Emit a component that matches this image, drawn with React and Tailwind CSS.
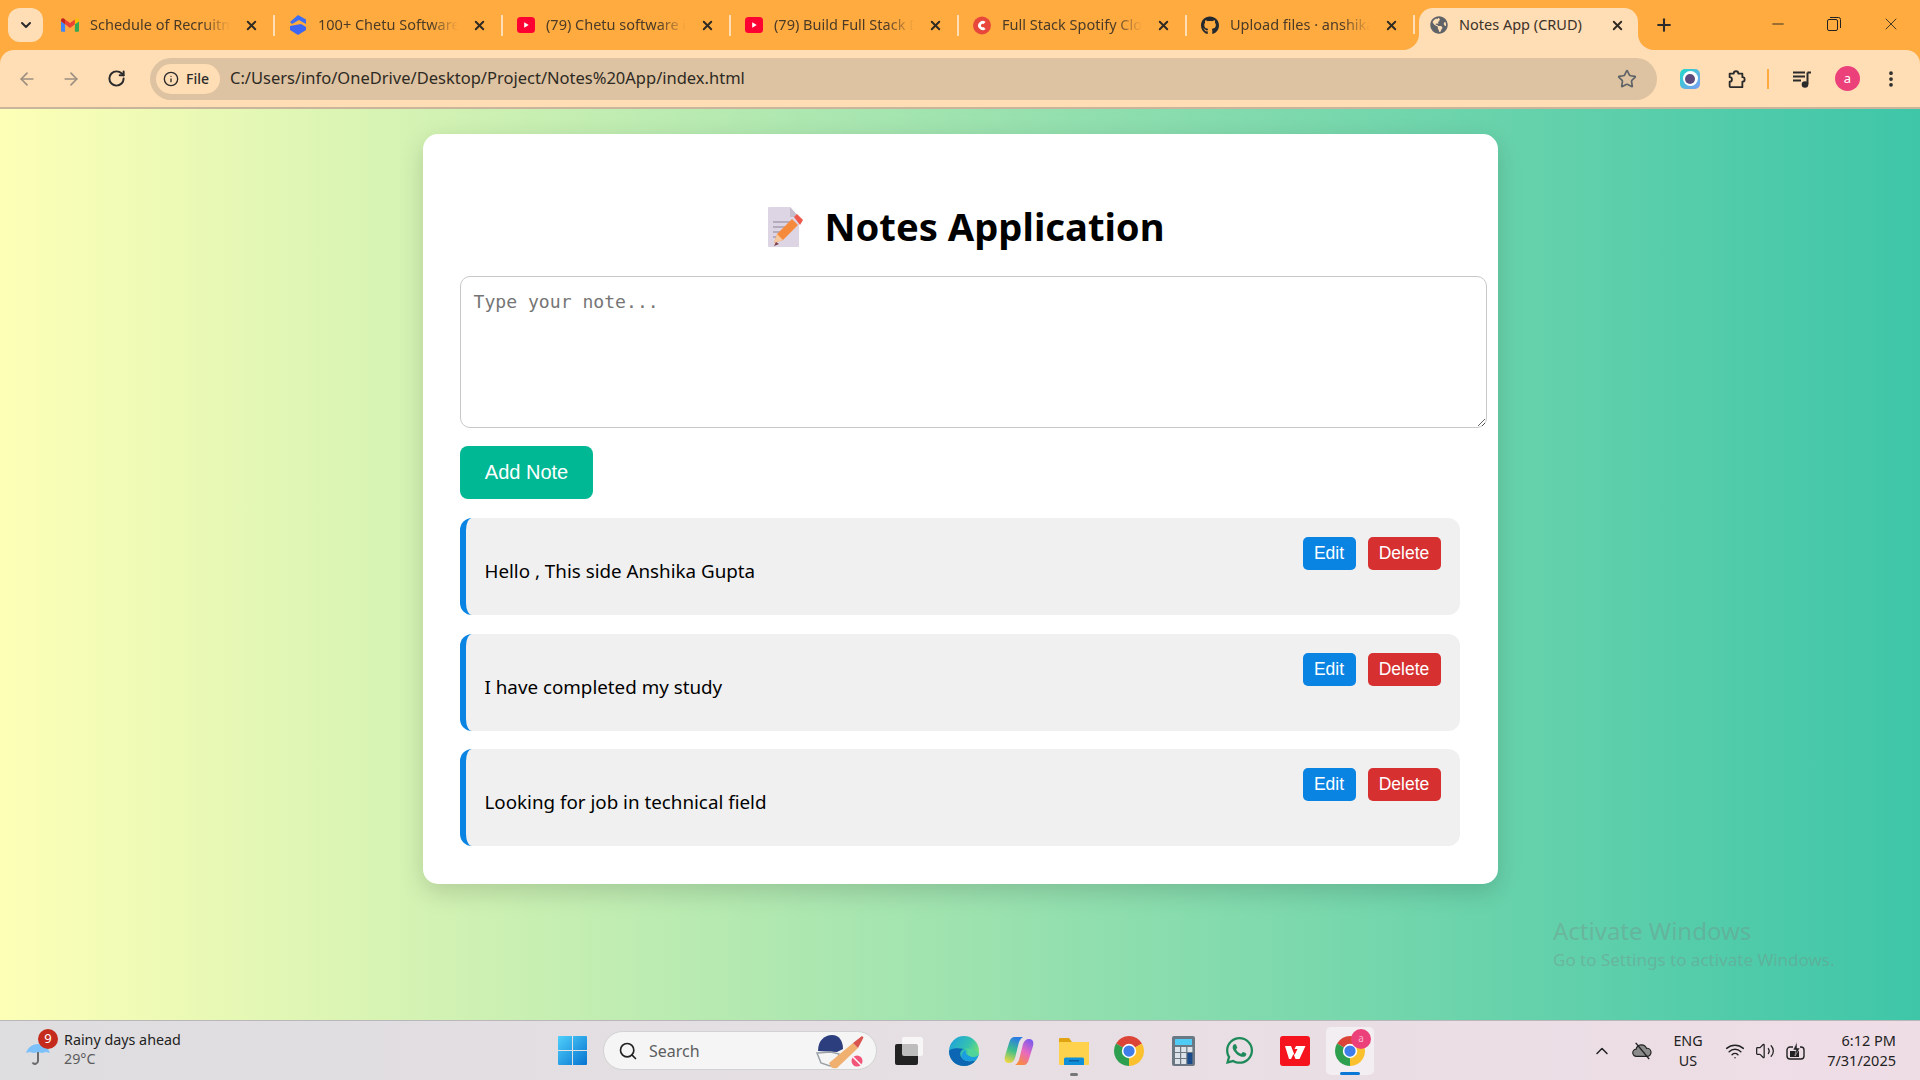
import {
  ArrowLeft,
  ArrowRight,
  ChevronDown,
  ChevronUp,
  Info,
  Minus,
  MoreVertical,
  Plus,
  RotateCw,
  Search,
  Star,
  Volume2,
  Wifi,
  X,
} from "lucide-react";
import { FaGithub, FaGlobeAmericas, FaWhatsapp } from "react-icons/fa";

const UI = "font-['Noto_Sans','Open_Sans',sans-serif]";

function GmailIcon() {
  return (
    <svg viewBox="0 0 24 18" className="w-[18px] h-[14px]">
      <path d="M1.6 18A1.6 1.6 0 0 1 0 16.4V4l5.5 4v10z" fill="#4285F4" />
      <path d="M18.500 18V8L24 4v12.400a1.600 1.600 0 0 1-1.600 1.600z" fill="#34A853" />
      <path d="M18.500 1.500V8L24 4V2.500C24 .3 21.600-.8 19.900.5z" fill="#FBBC04" />
      <path d="M5.500 8V1.500L12 6.400l6.500-4.900V8L12 12.900z" fill="#EA4335" />
      <path d="M0 2.500V4l5.500 4V1.500L4.100.5C2.400-.8 0 .3 0 2.500z" fill="#C5221F" />
    </svg>
  );
}

function ChetuIcon() {
  return (
    <svg viewBox="0 0 18 20" className="w-[18px] h-[20px]">
      <path d="M9 0l8 4.500V9l-7-4-7 4-2-2z" fill="#3D6DF2" />
      <path d="M1 11l11-2 5 3v3l-8 5-8-5z" fill="#3F66F0" />
    </svg>
  );
}

function YoutubeIcon() {
  return (
    <svg viewBox="0 0 20 18" className="w-[19px] h-[18px]">
      <rect width="20" height="18" rx="4" fill="#FF0033" />
      <path d="M8 6l5 3-5 3z" fill="#fff" />
    </svg>
  );
}

function SpotifyCloneIcon() {
  return (
    <svg viewBox="0 0 20 20" className="w-[19px] h-[19px]">
      <circle cx="10" cy="10" r="10" fill="#E8483B" />
      <path d="M14 6.200a5 5 0 1 0 0 7.600l-2.300-2a2 2 0 1 1 0-3.600z" fill="#fff" />
    </svg>
  );
}

function Tab({ icon, title }) {
  return (
    <div className="w-[228px] h-[34px] mb-[8px] flex items-center pl-[14px] shrink-0">
      <span className="w-[18px] flex justify-center shrink-0">{icon}</span>
      <span className="ml-[11px] w-[140px] overflow-hidden whitespace-nowrap text-[14.500px] text-[#4a3a26] [mask-image:linear-gradient(to_right,black_80%,transparent)]">
        {title}
      </span>
      <X size={15} strokeWidth={3} className="ml-[14px] text-[#2f2a22] shrink-0" />
      <span className="ml-auto w-[2px] h-[21px] bg-[#FFDDB5] shrink-0" />
    </div>
  );
}

function ActiveTab() {
  return (
    <div className="relative ml-[4px] w-[219px] h-[42px] flex items-center pl-[11px] pr-[13px] pb-[8px] bg-[#FFDDB5] rounded-t-[14px] shrink-0">
      <span className="absolute -left-[16px] bottom-0 w-[16px] h-[16px] bg-[#FFDDB5]">
        <span className="block w-full h-full bg-[#FFAB40] rounded-br-[16px]" />
      </span>
      <span className="absolute -right-[16px] bottom-0 w-[16px] h-[16px] bg-[#FFDDB5]">
        <span className="block w-full h-full bg-[#FFAB40] rounded-bl-[16px]" />
      </span>
      <FaGlobeAmericas size={18} className="text-[#5f6368] shrink-0" />
      <span className="ml-[11px] whitespace-nowrap text-[14.500px] text-[#3b3228]">Notes App (CRUD)</span>
      <X size={15} strokeWidth={3} className="ml-auto text-[#2f2a22] shrink-0" />
    </div>
  );
}

function RestoreIcon() {
  return (
    <svg viewBox="0 0 14 14" className="self-start mt-[17px] ml-[40px] w-[14px] h-[14px] shrink-0" fill="none" stroke="#222" strokeWidth="1">
      <rect x="0.500" y="2.500" width="10" height="11" rx="1.500" />
      <path d="M3 .5h8.500a2 2 0 0 1 2 2V11" />
    </svg>
  );
}

function TabStrip() {
  return (
    <div className="h-[50px] bg-[#FFAB40] flex items-end pl-[8px] shrink-0">
      <div className="self-start mt-[8px] mr-[4px] w-[35px] h-[34px] rounded-[12px] bg-[#FFDDB5] flex items-center justify-center shrink-0">
        <ChevronDown size={16} strokeWidth={3} className="text-[#2b2b2b]" />
      </div>
      <Tab icon={<GmailIcon />} title="Schedule of Recruitment" />
      <Tab icon={<ChetuIcon />} title="100+ Chetu Software Jobs" />
      <Tab icon={<YoutubeIcon />} title="(79) Chetu software interview" />
      <Tab icon={<YoutubeIcon />} title="(79) Build Full Stack Dev" />
      <Tab icon={<SpotifyCloneIcon />} title="Full Stack Spotify Clone" />
      <Tab icon={<FaGithub size={19} className="text-[#24292f]" />} title="Upload files · anshika" />
      <ActiveTab />
      <Plus size={20} strokeWidth={2.500} className="self-center ml-[16px] text-[#2b2b2b] shrink-0" />
      <Minus size={18} strokeWidth={1.200} className="self-start mt-[15px] ml-[95px] text-[#222] shrink-0" />
      <RestoreIcon />
      <X size={20} strokeWidth={1} className="self-start mt-[14px] ml-[40px] text-[#222] shrink-0" />
    </div>
  );
}

function CameraExt() {
  return (
    <span className="w-[20px] h-[20px] rounded-[5px] bg-[linear-gradient(135deg,#1fd8c8,#7f9cf5)] flex items-center justify-center shrink-0">
      <span className="w-[15px] h-[15px] rounded-full bg-white flex items-center justify-center">
        <span className="w-[10px] h-[10px] rounded-full bg-[#5d4a7d]" />
      </span>
    </span>
  );
}

function ExtensionIcon() {
  return (
    <svg viewBox="0 0 22 22" className="ml-[26px] w-[20px] h-[20px] shrink-0" fill="none" stroke="#2b2b2b" strokeWidth="2" strokeLinejoin="round">
      <path d="M4 5h4.500a2.500 2.500 0 0 1 5 0H18v4a2.500 2.500 0 0 1 0 5v6H5a1 1 0 0 1-1-1v-5a2.500 2.500 0 0 0 0-5z" />
    </svg>
  );
}

function MediaIcon() {
  return (
    <svg viewBox="0 0 20 20" className="ml-[23px] w-[20px] h-[20px] shrink-0">
      <path d="M1 3.500h12M1 7.500h12M1 11.500h8" stroke="#2b2b2b" strokeWidth="2" />
      <path d="M15.500 3.500h3.500M15.500 3.500V15" stroke="#2b2b2b" strokeWidth="2" fill="none" />
      <circle cx="13" cy="15.500" r="3.300" fill="#2b2b2b" />
    </svg>
  );
}

function Toolbar() {
  return (
    <div className="h-[59px] bg-[#FFAB40] shrink-0">
      <div className={`h-full rounded-t-[14px] bg-[#FFDDB5] border-b-2 border-[#C9B59C] flex items-center ${UI}`}>
        <ArrowLeft size={20} strokeWidth={2} className="ml-[17px] text-[#9a8f80] shrink-0" />
        <ArrowRight size={20} strokeWidth={2} className="ml-[24px] text-[#9a8f80] shrink-0" />
        <RotateCw size={19} strokeWidth={2.500} className="ml-[26px] text-[#2b2b2b] shrink-0" />
        <div className="ml-[24px] w-[1507px] h-[42px] rounded-full bg-[#DDC3A1] flex items-center pl-[6px] pr-[20px] shrink-0">
          <div className="w-[64px] h-[30px] rounded-full bg-[#FFDDB5] flex items-center pl-[7px] shrink-0">
            <Info size={16} strokeWidth={2} className="text-[#2b2b2b] shrink-0" />
            <span className="ml-[7px] text-[14px] font-medium text-[#2b2b2b]">File</span>
          </div>
          <span className="ml-[10px] text-[16.500px] text-[#2e2a24] whitespace-nowrap">
            C:/Users/info/OneDrive/Desktop/Project/Notes%20App/index.html
          </span>
          <Star size={20} strokeWidth={2} className="ml-auto text-[#5f6368] shrink-0" />
        </div>
        <span className="ml-[23px]"><CameraExt /></span>
        <ExtensionIcon />
        <span className="ml-[21px] w-[2px] h-[20px] bg-[#FFAB40] shrink-0" />
        <MediaIcon />
        <span className="ml-[23px] w-[25px] h-[25px] rounded-full bg-[#EC407A] text-white text-[13px] flex items-center justify-center shrink-0">
          a
        </span>
        <MoreVertical size={20} strokeWidth={2.500} className="ml-[21px] text-[#2b2b2b] shrink-0" />
      </div>
    </div>
  );
}

function NoteEmoji() {
  return (
    <svg viewBox="0 0 36 40" className="w-[36px] h-[40px] shrink-0">
      <path d="M0 1a1 1 0 0 1 1-1h21l9 10v29a1 1 0 0 1-1 1H1a1 1 0 0 1-1-1z" fill="#DED5E4" />
      <path d="M22 0l9 10h-9z" fill="#C5BDCC" />
      <path d="M5 15h17M5 20h15M5 25h12M5 30h9" stroke="#A79FAE" strokeWidth="1.500" />
      <path d="M6 36l3-9L24 12l6 6-15 15z" fill="#F58A3C" />
      <path d="M26 10l3-3 6 6-3 5z" fill="#F0584A" />
      <path d="M6 36l3-9 6 6z" fill="#F7C9A0" />
      <path d="M6 39l2-4 3 2z" fill="#7A3E48" />
    </svg>
  );
}

function NoteCard({ text }) {
  return (
    <div className="h-[97px] rounded-[12px] border-l-[6px] border-[#0984E3] bg-[#F0F0F0] flex justify-between pl-[19px] pr-[19px] pt-[19px]">
      <p className={`mt-[19px] text-[18.800px] leading-[30px] text-black ${UI}`}>{text}</p>
      <div className="flex gap-[12px] items-start">
        <button className="w-[53px] h-[33px] rounded-[5px] bg-[#0984E3] text-white text-[17.500px] font-['Liberation_Sans',sans-serif]">
          Edit
        </button>
        <button className="w-[73px] h-[33px] rounded-[5px] bg-[#D63031] text-white text-[17.500px] font-['Liberation_Sans',sans-serif]">
          Delete
        </button>
      </div>
    </div>
  );
}

function NotesPage() {
  return (
    <main className="relative flex-1 bg-[linear-gradient(to_right,#FDFFB6,#3EC6A8)] pt-[25px] overflow-hidden">
      <div className="mx-auto w-[1075px] h-[750px] bg-white rounded-[15px] shadow-[0_8px_24px_rgba(0,0,0,0.15)] pl-[37px] pt-[66px]">
        <h1 className={`w-[1000px] h-[54px] mb-[22px] pl-[14px] flex items-center justify-center gap-[20px] text-[38.200px] font-bold text-black ${UI}`}>
          <NoteEmoji />
          Notes Application
        </h1>
        <textarea
          placeholder="Type your note..."
          className="block w-[1027px] h-[152px] rounded-[10px] border border-[#C8C8C8] px-[13px] py-[13px] text-[18.100px] leading-[24px] font-['DejaVu_Sans_Mono',monospace] placeholder:text-[#757575] outline-none"
        />
        <button className="block mt-[18px] w-[133px] h-[53px] pb-[2px] pl-[1px] rounded-[8px] bg-[#00B894] text-white text-[20px] font-['Liberation_Sans',sans-serif]">
          Add Note
        </button>
        <div className="mt-[19px] w-[1000px] flex flex-col gap-[18.500px]">
          <NoteCard text="Hello , This side Anshika Gupta" />
          <NoteCard text="I have completed my study" />
          <NoteCard text="Looking for job in technical field" />
        </div>
      </div>
      <div className={`absolute left-[1553px] top-[806px] text-[#788c87]/40 ${UI}`}>
        <div className="text-[24px] leading-[32px]">Activate Windows</div>
        <div className="text-[17px] leading-[25px]">Go to Settings to activate Windows.</div>
      </div>
    </main>
  );
}

function ChromeIcon({ size = "w-[30px] h-[30px]" }) {
  return (
    <svg viewBox="0 0 48 48" className={`${size} shrink-0`}>
      <path d="M24 24L3.220 12A24 24 0 0 1 44.780 12z" fill="#DB4437" />
      <path d="M24 24L44.780 12A24 24 0 0 1 24 48z" fill="#FBC02D" />
      <path d="M24 24L24 48A24 24 0 0 1 3.220 12z" fill="#2E9E4F" />
      <circle cx="24" cy="24" r="11.500" fill="#fff" />
      <circle cx="24" cy="24" r="9" fill="#3F7EEA" />
    </svg>
  );
}

function WindowsLogo() {
  return (
    <svg viewBox="0 0 29 29" className="w-[29px] h-[29px] shrink-0">
      <defs>
        <linearGradient id="winGrad" x1="0" y1="0" x2="1" y2="1">
          <stop offset="0" stopColor="#4FD0FB" />
          <stop offset="1" stopColor="#0673D0" />
        </linearGradient>
      </defs>
      <rect width="29" height="29" rx="1" fill="url(#winGrad)" />
      <path d="M14.500 0v29M0 14.500h29" stroke="#E3E1E3" strokeWidth="1" />
    </svg>
  );
}

function CricketIcon() {
  return (
    <svg viewBox="0 0 50 36" className="w-[50px] h-[36px] shrink-0">
      <path d="M3 18C3 7 10 2 17 2s11 6 11 14l-6 3z" fill="#2C3E7E" />
      <path d="M2 20l14-1 8 2-2 9-7 3-9-3z" fill="none" stroke="#9aa0a6" strokeWidth="1.500" />
      <path d="M14 30L38 10l5 5-21 20q-4 1-6-1z" fill="#F0B070" />
      <path d="M38 10l9-7 1.500 1.500L43 15z" fill="#D9534F" />
      <circle cx="42" cy="28" r="5.500" fill="#F2557A" />
      <path d="M38 24l8 8" stroke="#fff" strokeWidth="1.500" />
    </svg>
  );
}

function EdgeIcon() {
  return (
    <svg viewBox="0 0 30 30" className="w-[30px] h-[30px] shrink-0">
      <defs>
        <linearGradient id="edgeTop" x1="0" y1="0" x2="1" y2="0.600">
          <stop offset="0" stopColor="#1B9DE2" />
          <stop offset="0.600" stopColor="#35C1B0" />
          <stop offset="1" stopColor="#7BE36B" />
        </linearGradient>
      </defs>
      <circle cx="15" cy="15" r="15" fill="url(#edgeTop)" />
      <path d="M0 15c0 9 7 15 15 15 5 0 9-2 12-6-5 2-11 2-14-2-3-3-2-8 2-9-8-2-14 0-15 2z" fill="#0C66B4" />
      <path d="M13 22c3 4 9 4 14 2 1-1 2-3 3-6-2 2-6 3-9 2-4-1-5-4-4-6-3 1-5 4-4 8z" fill="#1B9DE2" />
      <path d="M15 13c6-1 14 1 15 5 0 0-1 3-5 3-4 0-7-2-6-4 1-2-2-4-4-4z" fill="#4FD59A" />
    </svg>
  );
}

function CopilotIcon() {
  return (
    <svg viewBox="0 0 30 30" className="w-[30px] h-[30px] shrink-0">
      <defs>
        <linearGradient id="copilotA" x1="0.500" y1="0" x2="0.200" y2="1">
          <stop offset="0" stopColor="#2B7BE4" />
          <stop offset="0.500" stopColor="#3FC08A" />
          <stop offset="1" stopColor="#F5D640" />
        </linearGradient>
        <linearGradient id="copilotB" x1="0.800" y1="0" x2="0.300" y2="1">
          <stop offset="0" stopColor="#7A5AF0" />
          <stop offset="0.500" stopColor="#E86AC0" />
          <stop offset="1" stopColor="#F98A3C" />
        </linearGradient>
      </defs>
      <path d="M20 29h-9c2-1 3-3 4-5l4-16c1-3 3-5 6-5 4 0 5 3 4 7l-4 13c-1 4-3 6-5 6z" fill="url(#copilotB)" />
      <path d="M10 1h9c-2 1-3 3-4 5l-4 16c-1 3-3 5-6 5-4 0-5-3-4-7L5 7c1-4 3-6 5-6z" fill="url(#copilotA)" />
    </svg>
  );
}

function FolderIcon() {
  return (
    <svg viewBox="0 0 30 28" className="w-[30px] h-[28px] shrink-0">
      <path d="M0 2a1 1 0 0 1 1-1h9l3 4h17v3H0z" fill="#E0A412" />
      <rect y="5" width="30" height="23" rx="1" fill="#FFD24D" />
      <path d="M5 28v-6a1.500 1.500 0 0 1 1.500-1.500h17A1.500 1.500 0 0 1 25 22v6z" fill="#0F8FD8" />
      <rect x="10" y="23" width="10" height="1.500" fill="#0B5FA5" />
    </svg>
  );
}

function CalculatorIcon() {
  const keys = [];
  for (let row = 0; row < 3; row++) {
    for (let col = 0; col < 3; col++) {
      if (col === 2 && row > 0) continue;
      keys.push(<rect key={`${row}-${col}`} x={3 + col * 6.200} y={11 + row * 6} width="5" height="5" fill="#DDE3E8" />);
    }
  }
  return (
    <svg viewBox="0 0 23 30" className="w-[23px] h-[30px] shrink-0">
      <rect width="23" height="30" rx="2" fill="#6B7883" />
      <rect x="3" y="3" width="17" height="6" fill="#4FCBF5" />
      {keys}
      <rect x="15.400" y="17" width="5" height="11" fill="#1A4A8A" />
    </svg>
  );
}

function WpsIcon() {
  return (
    <svg viewBox="0 0 30 30" className="w-[30px] h-[30px] shrink-0">
      <rect width="30" height="30" rx="3" fill="#F5141E" />
      <path d="M5 10h6l3.500 9 3-6h-3l1.500-3h9.500l-6 13h-4l-2-5-2.500 5h-2z" fill="#fff" />
    </svg>
  );
}

function UmbrellaIcon() {
  return (
    <svg viewBox="0 0 24 22" className="w-[24px] h-[22px] shrink-0">
      <path d="M12 9v9a3 3 0 0 1-5.500 1.500" stroke="#6b6b6b" strokeWidth="2" fill="none" />
      <path d="M0 10C2 4 7 1 12 1s10 3 12 9l-4-1-4 1-4-1-4 1-4-1z" fill="#7DC1FA" />
    </svg>
  );
}

function CloudMuted() {
  return (
    <svg viewBox="0 0 22 20" className="w-[20px] h-[18px] shrink-0">
      <path d="M5 16a4 4 0 0 1-.500-8A6 6 0 0 1 16 7a4.500 4.500 0 0 1 1 9z" fill="#8b8b8b" stroke="#222" strokeWidth="1.300" />
      <path d="M4 1l15 18" stroke="#222" strokeWidth="1.600" />
    </svg>
  );
}

function BatteryCharge() {
  return (
    <svg viewBox="0 0 20 20" className="w-[20px] h-[20px] shrink-0">
      <path d="M7 6H4a3 3 0 0 0-3 3v6a3 3 0 0 0 3 3h11a3 3 0 0 0 3-3V9a3 3 0 0 0-3-3h-1" stroke="#222" strokeWidth="1.400" fill="none" />
      <rect x="4" y="10" width="9" height="6" fill="#222" />
      <path d="M11 1L7 9h3l-1 6 5-8h-3z" fill="#222" stroke="#efdfe8" strokeWidth="0.500" />
    </svg>
  );
}

function Taskbar() {
  return (
    <footer className={`relative h-[60px] shrink-0 border-t border-[#B9B7B9] bg-[linear-gradient(to_right,#DEDDDF,#E5DFE3_45%,#EFDDE6)] flex items-center ${UI}`}>
      <div className="w-[558px] flex items-center pl-[26px] shrink-0">
        <div className="relative mt-[6px]">
          <UmbrellaIcon />
          <span className="absolute left-[12px] -top-[14px] w-[20px] h-[20px] rounded-full bg-[#C42B1C] text-white text-[13px] flex items-center justify-center">
            9
          </span>
        </div>
        <div className="ml-[14px] mb-[3px] leading-[19.500px]">
          <div className="text-[14.300px] text-[#222] whitespace-nowrap">Rainy days ahead</div>
          <div className="text-[14.300px] text-[#5c5c5c]">29°C</div>
        </div>
      </div>
      <WindowsLogo />
      <div className="ml-[16px] w-[274px] h-[39px] rounded-full bg-[#F5F5F5] border border-[#D2D2D2] flex items-center pl-[14px] pr-[11px] shrink-0">
        <Search size={20} strokeWidth={2} className="text-[#222] shrink-0" />
        <span className="ml-[11px] text-[16px] text-[#5e5e5e]">Search</span>
        <span className="ml-auto"><CricketIcon /></span>
      </div>
      <div className="relative ml-[18px] w-[28px] h-[28px] shrink-0">
        <span className="absolute left-0 bottom-0 w-[23px] h-[21px] bg-[#222] rounded-[2px]" />
        <span className="absolute right-0 top-0 w-[21px] h-[19px] bg-white/70 rounded-[2px]" />
      </div>
      <span className="ml-[26px]"><EdgeIcon /></span>
      <span className="ml-[25px]"><CopilotIcon /></span>
      <div className="relative ml-[25px]">
        <FolderIcon />
        <span className="absolute left-[11px] -bottom-[11px] w-[8px] h-[3px] rounded-full bg-[#777]" />
      </div>
      <ChromeIcon size="ml-[25px] w-[30px] h-[30px]" />
      <span className="ml-[28px]"><CalculatorIcon /></span>
      <span className="ml-[29px] text-[#1E8A5A]"><FaWhatsapp size={31} /></span>
      <span className="ml-[25px]"><WpsIcon /></span>
      <div className="relative ml-[16px] w-[48px] h-[48px] rounded-[5px] bg-[#F3EEF1] flex items-center justify-center shrink-0">
        <ChromeIcon />
        <span className="absolute left-[25px] top-[2px] w-[20px] h-[20px] rounded-full bg-[#EC407A] text-[#f9b3cb] text-[10px] flex items-center justify-center">
          a
        </span>
        <span className="absolute left-[14px] bottom-0 w-[20px] h-[3px] rounded-full bg-[#0A78D4]" />
      </div>
      <ChevronUp size={20} strokeWidth={1.800} className="ml-[218px] text-[#222] shrink-0" />
      <span className="ml-[20px]"><CloudMuted /></span>
      <div className="ml-[19px] w-[34px] text-center text-[14.300px] leading-[20px] text-[#222] shrink-0">
        <div>ENG</div>
        <div>US</div>
      </div>
      <Wifi size={20} strokeWidth={1.800} className="ml-[20px] text-[#222] shrink-0" />
      <Volume2 size={20} strokeWidth={1.500} className="ml-[10px] text-[#222] shrink-0" />
      <span className="ml-[11px]"><BatteryCharge /></span>
      <div className="ml-auto pr-[24px] mb-[1px] text-right text-[14.500px] leading-[20px] text-[#222]">
        <div>6:12 PM</div>
        <div>7/31/2025</div>
      </div>
    </footer>
  );
}

export default function App() {
  return (
    <div className={`h-screen w-[1920px] flex flex-col overflow-hidden ${UI}`}>
      <TabStrip />
      <Toolbar />
      <NotesPage />
      <Taskbar />
    </div>
  );
}
